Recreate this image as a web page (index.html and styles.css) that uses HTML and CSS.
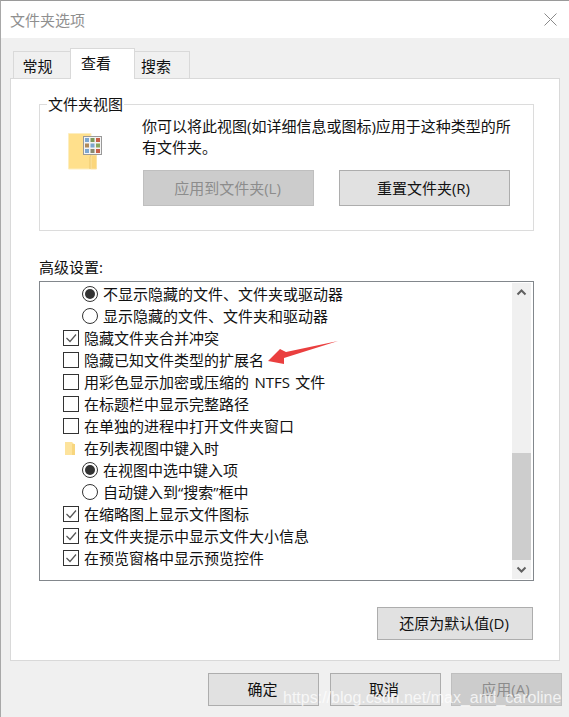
FILE: index.html
```html
<!DOCTYPE html>
<html lang="zh-CN">
<head>
<meta charset="utf-8">
<title>文件夹选项</title>
<link rel="stylesheet" href="styles.css">
</head>
<body>
<div class="window">
  <header class="titlebar">
    <span class="title">文件夹选项</span>
    <svg class="close" width="13" height="13" viewBox="0 0 13 13"><path d="M.5.5l12 12M12.500.5l-12 12" stroke="#8a8a8a" stroke-width="1" fill="none"/></svg>
  </header>
  <div class="body">
    <nav class="tabs">
      <span class="tab first">常规</span>
      <span class="tab active">查看</span>
      <span class="tab last">搜索</span>
    </nav>
    <main class="panel">
      <section class="group">
        <span class="legend">文件夹视图</span>
        <svg class="folder" width="35" height="37" viewBox="0 0 35 37">
          <path d="M.5.500h22.500v35.500H.500z" fill="#ffe08c" stroke="#fdeec0"/>
          <path d="M23 22h5.500v14H23z" fill="#fbd67c" stroke="#fbe3a5"/>
          <path d="M23 22l-1 2v12" stroke="#ecc86c" fill="none"/>
          <rect x="15.500" y="3.500" width="18" height="18" fill="#f4f4f4" stroke="#999"/>
          <rect x="17" y="5" width="4" height="4" fill="#7da7d0"/><rect x="22.500" y="5" width="4" height="4" fill="#7f9a5a"/><rect x="28" y="5" width="4" height="4" fill="#c8604a"/>
          <rect x="17" y="10.500" width="4" height="4" fill="#b08a5a"/><rect x="22.500" y="10.500" width="4" height="4" fill="#7da7d0"/><rect x="28" y="10.500" width="4" height="4" fill="#8aa860"/>
          <rect x="17" y="16" width="4" height="4" fill="#7da7d0"/><rect x="22.500" y="16" width="4" height="4" fill="#8a8a70"/><rect x="28" y="16" width="4" height="4" fill="#c8604a"/>
        </svg>
        <div class="group-main">
          <p class="desc">你可以将此视图(如详细信息或图标)应用于这种类型的所有文件夹。</p>
          <div class="group-buttons">
            <span class="btn disabled wide">应用到文件夹(L)</span>
            <span class="btn wide">重置文件夹(R)</span>
          </div>
        </div>
      </section>
      <div class="advanced-label">高级设置:</div>
      <section class="listbox">
        <ul class="rows">
          <li class="row sub"><i class="radio on"></i>不显示隐藏的文件、文件夹或驱动器</li>
          <li class="row sub"><i class="radio"></i>显示隐藏的文件、文件夹和驱动器</li>
          <li class="row"><i class="check on"><svg width="14" height="14" viewBox="0 0 14 14"><path d="M2.500 7l3.500 3.500 6-7" stroke="#555" stroke-width="1.200" fill="none"/></svg></i>隐藏文件夹合并冲突</li>
          <li class="row"><i class="check"></i>隐藏已知文件类型的扩展名</li>
          <li class="row"><i class="check"></i>用彩色显示加密或压缩的 NTFS 文件</li>
          <li class="row"><i class="check"></i>在标题栏中显示完整路径</li>
          <li class="row"><i class="check"></i>在单独的进程中打开文件夹窗口</li>
          <li class="row"><svg class="mini-folder" width="16" height="15" viewBox="0 0 16 15"><path d="M2 1h7l3 3v10H2z" fill="#fde39c"/><path d="M9 3h3v11H9z" fill="#f8d67e"/></svg>在列表视图中键入时</li>
          <li class="row sub"><i class="radio on"></i>在视图中选中键入项</li>
          <li class="row sub"><i class="radio"></i>自动键入到“搜索”框中</li>
          <li class="row"><i class="check on"><svg width="14" height="14" viewBox="0 0 14 14"><path d="M2.500 7l3.500 3.500 6-7" stroke="#555" stroke-width="1.200" fill="none"/></svg></i>在缩略图上显示文件图标</li>
          <li class="row"><i class="check on"><svg width="14" height="14" viewBox="0 0 14 14"><path d="M2.500 7l3.500 3.500 6-7" stroke="#555" stroke-width="1.200" fill="none"/></svg></i>在文件夹提示中显示文件大小信息</li>
          <li class="row"><i class="check on"><svg width="14" height="14" viewBox="0 0 14 14"><path d="M2.500 7l3.500 3.500 6-7" stroke="#555" stroke-width="1.200" fill="none"/></svg></i>在预览窗格中显示预览控件</li>
        </ul>
        <div class="scrollbar">
          <svg class="arrow" width="19" height="19" viewBox="0 0 19 19"><path d="M5.500 11.500l4-4 4 4" stroke="#606060" stroke-width="2" fill="none"/></svg>
          <div class="track"><div class="thumb"></div></div>
          <svg class="arrow" width="19" height="19" viewBox="0 0 19 19"><path d="M5.500 7.500l4 4 4-4" stroke="#606060" stroke-width="2" fill="none"/></svg>
        </div>
      </section>
      <div class="restore"><span class="btn restore-btn">还原为默认值(D)</span></div>
    </main>
    <footer class="footer">
      <span class="btn foot">确定</span>
      <span class="btn foot">取消</span>
      <span class="btn foot disabled">应用(A)</span>
    </footer>
  </div>
  <svg class="annotation" width="72" height="25" viewBox="0 0 72 25"><path d="M71 1L19 12 13 9 1 21 17 24 17 18z" fill="#ea3f3f"/></svg>
  <span class="watermark">https://blog.csdn.net/max_and_caroline</span>
</div>
</body>
</html>
```
FILE: styles.css
```css
* { box-sizing: border-box; }
html, body { margin: 0; padding: 0; }
body { width: 569px; height: 717px; overflow: hidden; background: #f0f0f0; font-family: "Open Sans", "Noto Sans CJK SC", sans-serif; font-size: 15px; color: #111; }
.window { position: relative; width: 569px; height: 717px; border-top: 1px solid #9a9a9a; border-left: 1px solid #a8a8a8; }
.titlebar { height: 37px; background: #fff; display: flex; align-items: center; justify-content: space-between; padding: 0 12px 0 9px; }
.title { color: #8f8f8f; font-size: 15px; }
.close { display: block; }
.body { padding: 10px 9px 0 9px; }
.tabs { display: flex; height: 31px; padding-left: 3px; align-items: flex-end; position: relative; z-index: 1; margin-bottom: -1px; }
.tab { height: 28px; display: flex; align-items: center; justify-content: center; background: #f0f0f0; border: 1px solid #d9d9d9; }
.tab.first { width: 57px; border-right: 0; padding: 1px 9px 0 0; }
.tab.active { width: 65px; height: 31px; background: #fff; border-bottom: 0; padding: 0 13px 4px 0; }
.tab.last { width: 55px; border-left: 0; padding: 1px 12px 0 0; }
.panel { width: 550px; height: 583px; background: #fff; border: 1px solid #d9d9d9; padding: 25px 25px 0 28px; }
.group { position: relative; height: 127px; border: 1px solid #dcdcdc; display: flex; padding: 28px 22px 0 28px; }
.legend { position: absolute; left: 7px; top: -11px; padding: 0 1px; background: #fff; line-height: 20px; }
.folder { flex: none; display: block; }
.group-main { margin-left: 39px; width: 372px; }
.desc { margin: -17px 0 0 0; line-height: 21px; height: 54px; }
.group-buttons { display: flex; justify-content: space-between; margin: 0 0 0 1px; width: 367px; }
.btn { display: flex; align-items: center; justify-content: center; background: #e1e1e1; border: 1px solid #adadad; padding: 0 2px 2px 0; }
.btn.disabled { background: #cccccc; border-color: #bfbfbf; color: #8c8c8c; }
.btn.wide { width: 171px; height: 36px; }
.advanced-label { margin-top: 25px; height: 25px; line-height: 22px; }
.listbox { display: flex; height: 300px; border: 1px solid #82878c; padding: 1px; }
.rows { list-style: none; margin: 0; padding: 0 0 0 22px; flex: 1; }
.row { height: 22px; display: flex; align-items: center; white-space: nowrap; padding-bottom: 2px; word-spacing: 1.500px; }
.row.sub { padding-left: 19px; }
.radio { width: 16px; height: 16px; border: 1px solid #333; border-radius: 50%; margin: 2px 5px 0 0; flex: none; display: flex; align-items: center; justify-content: center; background: #fff; }
.radio.on::after { content: ""; width: 10px; height: 10px; border-radius: 50%; background: #333; }
.check { width: 16px; height: 16px; border: 1px solid #333; margin: 2px 5px 0 0; flex: none; display: flex; align-items: center; justify-content: center; background: #fff; }
.check svg { display: block; }
.mini-folder { margin: 2px 5px 0 0; flex: none; display: block; }
.scrollbar { width: 19px; margin-right: 1px; background: #f0f0f0; display: flex; flex-direction: column; flex: none; }
.arrow { display: block; flex: none; }
.track { flex: 1; display: flex; flex-direction: column; justify-content: flex-end; }
.thumb { height: 107px; background: #cdcdcd; }
.restore { display: flex; justify-content: flex-end; margin-top: 26px; padding-right: 1px; }
.restore-btn { width: 156px; height: 33px; }
.footer { display: flex; justify-content: flex-end; gap: 10.500px; margin-top: 12px; margin-right: -2px; }
.btn.foot { width: 111px; height: 33px; }
.annotation { position: absolute; left: 266px; top: 339px; }
.watermark { position: absolute; left: 282px; top: 686px; font-family: "Liberation Sans", sans-serif; font-size: 16px; line-height: 22px; color: rgba(255,255,255,0.75); white-space: nowrap; }
```
